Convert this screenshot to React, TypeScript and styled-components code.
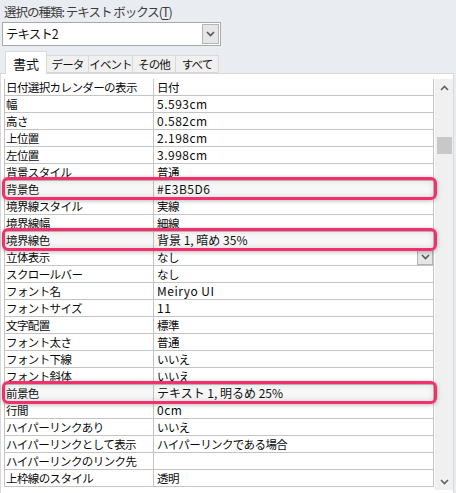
import styled, { createGlobalStyle } from "styled-components";

const GlobalStyle = createGlobalStyle`
  html, body {
    margin: 0;
    padding: 0;
    background: #e9ecf1;
  }
  body {
    font-family: "Noto Sans CJK JP", "Noto Sans", sans-serif;
  }
`;

const Page = styled.div`
  width: 456px;
  height: 493px;
  background: #e9ecf1;
  display: flex;
  flex-direction: column;
  overflow: hidden;
`;

const Title = styled.div`
  height: 22px;
  padding: 3px 0 0 4px;
  box-sizing: border-box;
  font-size: 12.5px;
  letter-spacing: -1px;
  line-height: 18px;
  color: #3c3c3c;
  u {
    text-decoration: underline;
    text-underline-offset: 2px;
  }
`;

const Combo = styled.div`
  margin-left: 2px;
  width: 219px;
  height: 24px;
  box-sizing: border-box;
  border: 1px solid #a9a9a9;
  background: #fff;
  display: flex;
  align-items: center;
  justify-content: space-between;
  padding: 0 1px 0 3px;
`;

const ComboText = styled.span`
  font-size: 12.5px;
  letter-spacing: -1px;
  line-height: 18px;
  color: #111;
`;

const DropButton = styled.div<{ $small?: boolean }>`
  width: ${(p) => (p.$small ? 16 : 17)}px;
  height: ${(p) => (p.$small ? 15 : 20)}px;
  box-sizing: border-box;
  background: #e6e6e6;
  border: 1px solid #b4b4b4;
  display: flex;
  align-items: center;
  justify-content: center;
`;

const Tabs = styled.div`
  margin-top: 5px;
  height: 22px;
  display: flex;
  align-items: flex-end;
  padding-left: 5px;
  position: relative;
  z-index: 2;
`;

const Tab = styled.div<{ $active?: boolean; $w: number }>`
  width: ${(p) => p.$w}px;
  height: ${(p) => (p.$active ? 23 : 18)}px;
  margin-bottom: ${(p) => (p.$active ? -1 : 0)}px;
  box-sizing: border-box;
  background: ${(p) => (p.$active ? "#fff" : "#f0f0f0")};
  border: 1px solid #d9d9d9;
  border-bottom: ${(p) => (p.$active ? "none" : "1px solid #d9d9d9")};
  border-left: ${(p) => (p.$active ? "1px solid #d9d9d9" : "none")};
  display: flex;
  align-items: center;
  justify-content: center;
  white-space: nowrap;
  font-size: ${(p) => (p.$active ? 13 : 11.5)}px;
  letter-spacing: ${(p) => (p.$active ? 0 : -0.9)}px;
  color: #111;
  line-height: 16px;
  padding-top: ${(p) => (p.$active ? 1 : 0)}px;
`;

const Panel = styled.div`
  width: 454px;
  height: 420px;
  box-sizing: border-box;
  background: #fff;
  border: 1px solid #d9d9d9;
  border-bottom: none;
  display: flex;
  align-items: flex-start;
  padding: 5px 0 0 3px;
`;

const Sheet = styled.div`
  width: 431px;
  border-left: 1px solid #c4c4c4;
  border-right: 1px solid #c4c4c4;
  display: flex;
  flex-direction: column;
`;

const Row = styled.div`
  position: relative;
  height: 17px;
  box-sizing: border-box;
  border-bottom: 1px solid #c4c4c4;
  display: grid;
  grid-template-columns: 148px 1fr;
`;

type Kind = "jp" | "ascii" | "mixed";

const sizes: Record<Kind, [number, number]> = {
  jp: [11.5, -0.6],
  ascii: [12, 0.5],
  mixed: [12, 0],
};

const Cell = styled.div<{ $value?: boolean; $kind?: Kind }>`
  position: relative;
  z-index: 2;
  min-width: 0;
  font-size: ${(p) => sizes[p.$kind ?? "jp"][0]}px;
  letter-spacing: ${(p) => sizes[p.$kind ?? "jp"][1]}px;
  line-height: 16px;
  height: 16px;
  color: #0a0a0a;
  white-space: nowrap;
  padding-left: ${(p) => (p.$value ? 3 : 1)}px;
  border-left: ${(p) => (p.$value ? "1px solid #c4c4c4" : "none")};
  display: flex;
  align-items: center;
  justify-content: space-between;
`;

const Highlight = styled.div`
  position: absolute;
  z-index: 3;
  left: -3px;
  right: -4px;
  top: -4px;
  height: 23px;
  box-sizing: border-box;
  border: 3px solid #f2306c;
  border-radius: 6px;
  background: rgba(120, 120, 120, 0.06);
  box-shadow: 0 1px 4px rgba(0, 0, 0, 0.28), inset 0 0 6px rgba(0, 0, 0, 0.14);
  pointer-events: none;
`;

const Scrollbar = styled.div`
  width: 18px;
  height: 411px;
  margin-left: 1px;
  background-color: #f0f0f0;
  background-image: radial-gradient(#e4e4e4 0.6px, transparent 0.7px);
  background-size: 2px 2px;
  display: flex;
  flex-direction: column;
`;

const Arrow = styled.div`
  height: 17px;
  display: flex;
  align-items: center;
  justify-content: center;
`;

const Track = styled.div`
  flex: 1;
  padding-top: 41px;
  display: flex;
  justify-content: center;
`;

const Thumb = styled.div`
  width: 15px;
  height: 17px;
  background: #c8c8c8;
`;

const Chevron = ({ up, color = "#606060" }: { up?: boolean; color?: string }) => (
  <svg width="9" height="6" viewBox="0 0 9 6">
    <path
      d={up ? "M1 5 L4.5 1.5 L8 5" : "M1 1 L4.5 4.5 L8 1"}
      fill="none"
      stroke={color}
      strokeWidth="1.6"
    />
  </svg>
);

const rows: { label: string; value: string; mark?: boolean; drop?: boolean }[] = [
  { label: "日付選択カレンダーの表示", value: "日付" },
  { label: "幅", value: "5.593cm" },
  { label: "高さ", value: "0.582cm" },
  { label: "上位置", value: "2.198cm" },
  { label: "左位置", value: "3.998cm" },
  { label: "背景スタイル", value: "普通" },
  { label: "背景色", value: "#E3B5D6", mark: true },
  { label: "境界線スタイル", value: "実線" },
  { label: "境界線幅", value: "細線" },
  { label: "境界線色", value: "背景 1, 暗め 35%", mark: true },
  { label: "立体表示", value: "なし", drop: true },
  { label: "スクロールバー", value: "なし" },
  { label: "フォント名", value: "Meiryo UI" },
  { label: "フォントサイズ", value: "11" },
  { label: "文字配置", value: "標準" },
  { label: "フォント太さ", value: "普通" },
  { label: "フォント下線", value: "いいえ" },
  { label: "フォント斜体", value: "いいえ" },
  { label: "前景色", value: "テキスト 1, 明るめ 25%", mark: true },
  { label: "行間", value: "0cm" },
  { label: "ハイパーリンクあり", value: "いいえ" },
  { label: "ハイパーリンクとして表示", value: "ハイパーリンクである場合" },
  { label: "ハイパーリンクのリンク先", value: "" },
  { label: "上枠線のスタイル", value: "透明" },
];

const tabs = [
  { name: "書式", w: 42, active: true },
  { name: "データ", w: 42 },
  { name: "イベント", w: 44 },
  { name: "その他", w: 43 },
  { name: "すべて", w: 43 },
];

const kindOf = (s: string): Kind => {
  if (/^[\x20-\x7e]+$/.test(s)) return "ascii";
  if (/[0-9]/.test(s)) return "mixed";
  return "jp";
};

export default function App() {
  return (
    <Page>
      <GlobalStyle />
      <Title>
        選択の種類: テキスト ボックス(<u>T</u>)
      </Title>
      <Combo>
        <ComboText>テキスト2</ComboText>
        <DropButton>
          <Chevron color="#555" />
        </DropButton>
      </Combo>
      <Tabs>
        {tabs.map((t) => (
          <Tab key={t.name} $active={t.active} $w={t.w}>
            {t.name}
          </Tab>
        ))}
      </Tabs>
      <Panel>
        <Sheet>
          {rows.map((r) => (
            <Row key={r.label}>
              <Cell>{r.label}</Cell>
              <Cell $value $kind={kindOf(r.value)}>
                {r.value}
                {r.drop && (
                  <DropButton $small>
                    <Chevron color="#555" />
                  </DropButton>
                )}
              </Cell>
              {r.mark && <Highlight />}
            </Row>
          ))}
        </Sheet>
        <Scrollbar>
          <Arrow>
            <Chevron up />
          </Arrow>
          <Track>
            <Thumb />
          </Track>
          <Arrow>
            <Chevron />
          </Arrow>
        </Scrollbar>
      </Panel>
    </Page>
  );
}
